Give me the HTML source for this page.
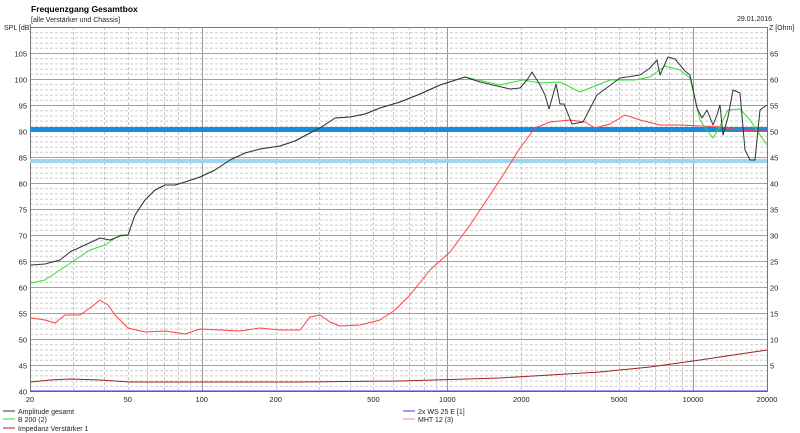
<!DOCTYPE html>
<html><head><meta charset="utf-8"><style>
html,body{margin:0;padding:0;background:#fff;width:800px;height:433px;overflow:hidden}
svg{display:block;font-family:"Liberation Sans",sans-serif}
</style></head><body>
<svg width="800" height="433" viewBox="0 0 800 433" xmlns="http://www.w3.org/2000/svg">
<rect width="800" height="433" fill="#fff"/>
<text x="31" y="12" font-size="8.5" font-weight="bold" fill="#000">Frequenzgang Gesamtbox</text>
<text x="31" y="22" font-size="7" fill="#222">[alle Verstärker und Chassis]</text>
<text x="737" y="21" font-size="7" fill="#222">29.01.2016</text>
<text x="4" y="30" font-size="7" fill="#222">SPL [dB]</text>
<text x="769" y="30" font-size="7" fill="#222">Z [Ohm]</text>
<g id="grid"></g>
<g id="fg"></g>
</svg>
<script>
(function(){
var ns="http://www.w3.org/2000/svg";
var g=document.getElementById("grid"),fg=document.getElementById("fg");
function el(p,t,a,txt){var e=document.createElementNS(ns,t);for(var k in a)e.setAttribute(k,a[k]);if(txt!==undefined)e.textContent=txt;p.appendChild(e);return e;}
var L=30,R=767,T=27,B=391;
function X(f){return L+(R-L)*Math.log10(f/20)/3;}
function Y(d){return B-(d-40)*(B-T)/70;}
for(var d=41;d<110;d++){if(d%5==0)continue;el(g,"line",{x1:L,x2:R,y1:Y(d)+.5,y2:Y(d)+.5,stroke:"#ccc","stroke-dasharray":"3,2","stroke-width":1});}
var dec=[10,100,1000,10000];
dec.forEach(function(m){for(var n=1;n<10;n++){var f=n*m;if(f<20||f>20000)continue;var x=Math.round(X(f))+.5;var major=(n==1);el(g,"line",{x1:x,x2:x,y1:T,y2:B,stroke:major?"#999":"#c8c8c8","stroke-dasharray":major?"":"3,2"});}});
for(var d=40;d<=110;d+=5){var y=Math.round(Y(d))+.5;el(g,"line",{x1:L,x2:R,y1:y,y2:y,stroke:"#a0a0a0"});
if(d>=40&&d<=105){el(g,"text",{x:L-3,y:y+3,"font-size":7.5,"text-anchor":"end",fill:"#222"},String(d));}
if(d>=45&&d<=105){el(g,"text",{x:R+3,y:y+3,"font-size":7.5,fill:"#222"},String(d-40));}}
el(g,"rect",{x:L+.5,y:T+.5,width:R-L,height:B-T,fill:"none",stroke:"#777"});
[20,50,100,200,500,1000,2000,5000,10000,20000].forEach(function(f){el(g,"text",{x:X(f),y:402,"font-size":7.5,"text-anchor":"middle",fill:"#222"},String(f));});
el(fg,"rect",{x:L,y:127,width:R-L,height:5,fill:"#138ee0"});
el(fg,"rect",{x:L,y:159,width:R-L,height:4,fill:"#9fd6f2"});
el(fg,"line",{x1:L,x2:R,y1:391,y2:391,stroke:"#3a3aff"});
function pl(pts,c){el(fg,"polyline",{points:pts,fill:"none",stroke:c,"stroke-width":1,"stroke-linejoin":"round"});}
pl("31,382 50,380 70,379 100,380 130,382 200,382 300,382 400,381 500,378 550,375 600,372 650,367 700,360 740,354 767,350","#a02020");
pl("31,318 45,320 55,323 65,315 80,315 90,308 100,300 108,305 115,315 128,328 145,332 165,331 185,334 200,329 220,330 240,331 260,328 280,330 300,330 310,317 320,315 330,322 340,326 360,325 380,320 395,310 410,295 430,270 450,252 470,225 490,195 505,172 520,148 535,128 550,122 570,120 585,122 595,128 610,124 625,115 640,120 660,125 680,125 700,126 720,127 740,130 760,131 767,131","#ff4040");
var mid="135,215 145,200 155,190 165,185 175,185 185,182 200,177 215,170 230,160 245,153 260,149 280,146 295,141 310,133 320,128 335,118 350,117 365,114 380,108 400,102 420,94 440,85 465,77 ";
pl("31,283 45,280 60,270 75,260 90,250 105,245 120,235 128,235 "+mid+"500,85 523,80 540,83 560,82 580,92 595,86 610,80 635,80 650,77 665,66 680,70 690,78 700,120 707,130 713,138 718,130 728,110 740,109 750,120 760,135 767,145","#33dd33");
pl("31,265 45,264 60,260 70,252 85,245 100,238 110,240 120,236 128,235 "+mid+"480,82 510,89 520,88 527,80 532,72 540,85 545,95 549,109 553,95 556,84 560,104 564,104 572,124 583,122 597,95 620,78 640,75 650,68 657,60 660,75 668,57 675,59 685,71 690,75 697,108 702,118 707,110 713,125 717,115 720,105 723,135 728,117 733,90 740,93 745,150 750,160 755,160 760,110 767,105","#333");
function leg(x,y,c,t){el(fg,"line",{x1:x,x2:x+12,y1:y,y2:y,stroke:c});el(fg,"text",{x:x+15,y:y+3,"font-size":7,fill:"#222"},t);}
leg(3,411,"#333","Amplitude gesamt");leg(3,419,"#33dd33","B 200 (2)");leg(3,428,"#a02020","Impedanz Verstärker 1");
leg(403,411,"#3a3aff","2x WS 25 E [1]");leg(403,419,"#ff8080","MHT 12 (3)");
})();
</script>
</body></html>
